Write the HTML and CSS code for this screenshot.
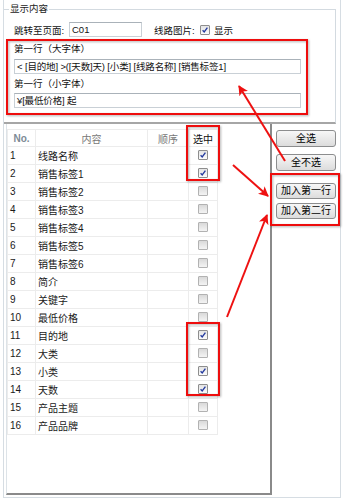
FILE: index.html
```html
<!DOCTYPE html>
<html lang="zh-CN">

<head>
    <meta charset="UTF-8">
    <title>显示内容</title>
    <link rel="stylesheet" href="styles.css">
</head>

<body>
    <div class="window">
        <fieldset class="display-group">
            <legend>显示内容</legend>
            <div class="page-row">
                <span class="page-label">跳转至页面:</span>
                <div class="text-box page-input">C01</div>
                <span class="pic-label">线路图片:</span>
                <span class="check on"><svg viewBox="0 0 8 8"><path d="M1.6 4.2 L3.2 6 L6.4 1.6"/></svg></span>
                <span>显示</span>
            </div>
            <div class="line-box">
                <div class="line-label">第一行（大字体）</div>
                <div class="text-box line-input">&lt; [目的地] &gt;([天数]天) [小类] [线路名称] [销售标签1]</div>
                <div class="line-label second">第一行（小字体）</div>
                <div class="text-box line-input small">¥[最低价格] 起</div>
            </div>
        </fieldset>

        <div class="lower">
            <div class="grid-panel">
                <table class="field-grid">
                    <colgroup>
                        <col class="col-no">
                        <col class="col-name">
                        <col class="col-order">
                        <col class="col-pick">
                    </colgroup>
                    <thead>
                        <tr>
                            <th class="no-head">No.</th>
                            <th>内容</th>
                            <th>顺序</th>
                            <th class="pick-head">选中</th>
                        </tr>
                    </thead>
                    <tbody>
                        <tr><td>1</td><td>线路名称</td><td></td><td class="pick"><span class="check on"><svg viewBox="0 0 8 8"><path d="M1.6 4.2 L3.2 6 L6.4 1.6"/></svg></span></td></tr>
                        <tr><td>2</td><td>销售标签1</td><td></td><td class="pick"><span class="check on"><svg viewBox="0 0 8 8"><path d="M1.6 4.2 L3.2 6 L6.4 1.6"/></svg></span></td></tr>
                        <tr><td>3</td><td>销售标签2</td><td></td><td class="pick"><span class="check"></span></td></tr>
                        <tr><td>4</td><td>销售标签3</td><td></td><td class="pick"><span class="check"></span></td></tr>
                        <tr><td>5</td><td>销售标签4</td><td></td><td class="pick"><span class="check"></span></td></tr>
                        <tr><td>6</td><td>销售标签5</td><td></td><td class="pick"><span class="check"></span></td></tr>
                        <tr><td>7</td><td>销售标签6</td><td></td><td class="pick"><span class="check"></span></td></tr>
                        <tr><td>8</td><td>简介</td><td></td><td class="pick"><span class="check"></span></td></tr>
                        <tr><td>9</td><td>关键字</td><td></td><td class="pick"><span class="check"></span></td></tr>
                        <tr><td>10</td><td>最低价格</td><td></td><td class="pick"><span class="check"></span></td></tr>
                        <tr><td>11</td><td>目的地</td><td></td><td class="pick"><span class="check on"><svg viewBox="0 0 8 8"><path d="M1.6 4.2 L3.2 6 L6.4 1.6"/></svg></span></td></tr>
                        <tr><td>12</td><td>大类</td><td></td><td class="pick"><span class="check"></span></td></tr>
                        <tr><td>13</td><td>小类</td><td></td><td class="pick"><span class="check on"><svg viewBox="0 0 8 8"><path d="M1.6 4.2 L3.2 6 L6.4 1.6"/></svg></span></td></tr>
                        <tr><td>14</td><td>天数</td><td></td><td class="pick"><span class="check on"><svg viewBox="0 0 8 8"><path d="M1.6 4.2 L3.2 6 L6.4 1.6"/></svg></span></td></tr>
                        <tr><td>15</td><td>产品主题</td><td></td><td class="pick"><span class="check"></span></td></tr>
                        <tr><td>16</td><td>产品品牌</td><td></td><td class="pick"><span class="check"></span></td></tr>
                    </tbody>
                </table>
            </div>

            <div class="buttons">
                <button class="btn btn-all">全选</button>
                <button class="btn btn-none">全不选</button>
                <button class="btn btn-line1">加入第一行</button>
                <button class="btn btn-line2">加入第二行</button>
            </div>
        </div>

        <!-- annotation layer: red boxes and arrows -->
        <svg class="marks" width="343" height="500" viewBox="0 0 343 500">
            <defs>
                <marker id="head" viewBox="0 0 10 10" refX="9" refY="5" markerWidth="5" markerHeight="5" orient="auto">
                    <path d="M0 0 L10 5 L0 10 L2.5 5 Z" fill="#ee1111"/>
                </marker>
                <filter id="shade" x="-10%" y="-10%" width="130%" height="130%">
                    <feDropShadow dx="1" dy="1" stdDeviation="1" flood-color="#000" flood-opacity="0.3"/>
                </filter>
            </defs>
            <g fill="none" stroke="#ee1111" stroke-width="2" filter="url(#shade)">
                <rect x="6" y="40" width="300" height="74"/>
                <rect x="186" y="126" width="32" height="54"/>
                <rect x="270" y="174" width="68" height="51"/>
                <rect x="186" y="323" width="32" height="72"/>
            </g>
            <g stroke="#ee1111" stroke-width="2" marker-end="url(#head)">
                <line x1="284" y1="161" x2="238" y2="86"/>
                <line x1="232" y1="165" x2="267" y2="196"/>
                <line x1="226" y1="317" x2="266" y2="215"/>
            </g>
        </svg>
    </div>
</body>

</html>
```

FILE: styles.css
```css
body {
    margin: 0;
    font-family: "Liberation Sans", "Noto Sans CJK SC", sans-serif;
    font-size: 10px;
    color: #111;
    background-color: #fff;
}

.window {
    position: relative;
    width: 338px;
    height: 498px;
    margin-left: 3px;
    padding-top: 3px;
    box-sizing: border-box;
    border: 1px solid #d6dde3;
    border-top: none;
}

/* 显示内容 group */
.display-group {
    margin: 0;
    padding: 0;
    width: 332px;
    height: 121px;
    box-sizing: border-box;
    border: 1px solid #d3dae0;
    border-left: none;
    border-bottom: 2px solid #a6a6a6;
    font-size: 9.5px;
}

.display-group legend {
    margin-left: 5px;
    padding: 0 1px;
    line-height: 12px;
    color: #222;
}

.page-row {
    display: flex;
    align-items: center;
    height: 15px;
    margin: 7px 0 0 10px;
}

.page-label {
    width: 55px;
}

.text-box {
    box-sizing: border-box;
    height: 15px;
    line-height: 13px;
    border: 1px solid #c9d0d6;
    border-top-color: #aab2b9;
    background-color: #fff;
    padding-left: 2px;
    white-space: nowrap;
    overflow: hidden;
}

.page-input {
    width: 73px;
}

.pic-label {
    width: 46px;
    margin-left: 12px;
}

.page-row .check {
    margin-right: 4px;
}

.line-box {
    margin: 5px 0 0 10px;
}

.line-label {
    line-height: 14px;
}

.line-label.second {
    margin-top: 3px;
}

.line-input {
    width: 287px;
    margin-top: 3px;
    letter-spacing: -0.15px;
}

.line-input.small {
    margin-top: 2px;
}

/* checkbox */
.check {
    display: inline-block;
    box-sizing: border-box;
    width: 10px;
    height: 10px;
    border: 1px solid #b2b2b2;
    border-radius: 1px;
    background: linear-gradient(#d9d9d9, #f4f4f4);
    vertical-align: middle;
}

.check.on {
    border-color: #8e8e8e;
    background: linear-gradient(#e4e4e4, #fbfbfb);
}

.check svg {
    display: block;
    width: 8px;
    height: 8px;
}

.check path {
    fill: none;
    stroke: #23399e;
    stroke-width: 1.3;
}

/* lower part */
.lower {
    display: flex;
    height: 373px;
}

.grid-panel {
    width: 266px;
    height: 371px;
    margin-left: 2px;
    padding-top: 5px;
    box-sizing: border-box;
    border-left: 1px solid #dde3e8;
    border-right: 2px solid #8a8a8a;
    border-bottom: 2px solid #8a8a8a;
    background-color: #fff;
}

.field-grid {
    border-collapse: collapse;
    table-layout: fixed;
    width: 210px;
}

.col-no {
    width: 28px;
}

.col-name {
    width: 112px;
}

.col-order {
    width: 41px;
}

.col-pick {
    width: 29px;
}

.field-grid th,
.field-grid td {
    padding: 0;
    border: 1px solid #ececec;
    white-space: nowrap;
    overflow: hidden;
}

.field-grid th {
    height: 16px;
    font-weight: normal;
    color: #777;
    text-align: center;
}

.field-grid th.no-head {
    color: #7d8b96;
    font-weight: bold;
}

.field-grid th.pick-head {
    color: #111;
}

.field-grid td {
    height: 17px;
    padding-left: 2px;
    color: #1a1a1a;
}

.field-grid td.pick {
    padding: 0;
    text-align: center;
}

.field-grid td.pick .check {
    position: relative;
    top: -1px;
}

/* right buttons */
.buttons {
    display: flex;
    flex-direction: column;
    padding: 6px 0 0 4px;
}

.btn {
    width: 60px;
    height: 17px;
    padding: 0;
    border: 1px solid #8c8d8e;
    border-radius: 3px;
    background: linear-gradient(#f7f7f7, #dcdcdc);
    font-family: inherit;
    font-size: 10px;
    line-height: 14px;
    color: #000;
}

.btn-none {
    margin-top: 7px;
}

.btn-line1 {
    height: 16px;
    margin-top: 12px;
}

.btn-line2 {
    height: 16px;
    margin-top: 4px;
}

.marks {
    position: absolute;
    top: 0;
    left: -3px;
    pointer-events: none;
}
```
